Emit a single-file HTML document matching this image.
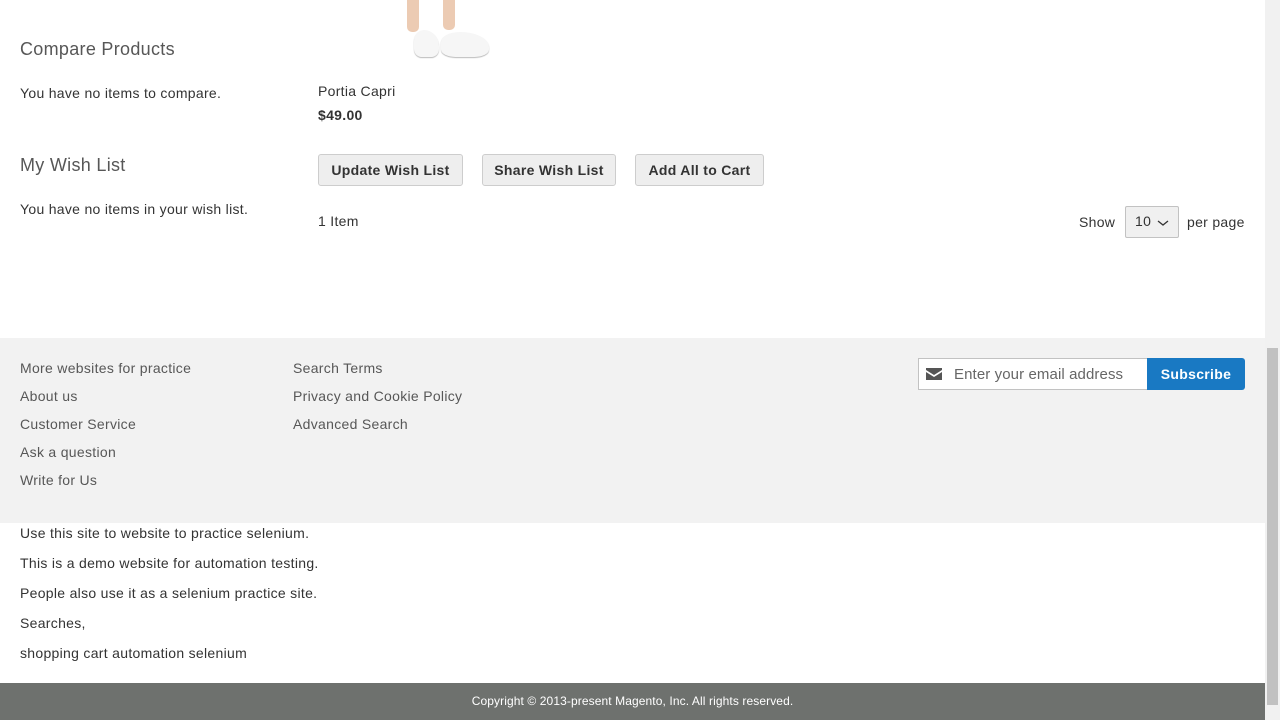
<!DOCTYPE html>
<html><head><meta charset="utf-8"><style>
*{margin:0;padding:0;box-sizing:border-box}
body{width:1280px;height:720px;position:relative;overflow:hidden;background:#fff;font-family:"Liberation Sans",sans-serif;font-size:14px;color:#333;letter-spacing:0.3px}
.a{position:absolute;white-space:nowrap;margin-top:1px}
.btn{position:absolute;height:32px;border:1px solid #cdcdcd;background:#eee;border-radius:3px;font-weight:bold;font-size:14px;color:#333;line-height:31px;text-align:center}
.leg{position:absolute;background:#eccbb3}
.shoe{position:absolute;background:#f6f6f6;border-radius:40% 60% 30% 30%;box-shadow:0 1px 1px #bbb}
</style></head><body>
<div class="leg" style="left:407px;top:0;width:12px;height:32px;border-radius:0 0 5px 5px"></div>
<div class="leg" style="left:443px;top:0;width:12px;height:30px;border-radius:0 0 5px 5px"></div>
<div class="shoe" style="left:414px;top:30px;width:25px;height:27px"></div>
<div class="shoe" style="left:441px;top:32px;width:48px;height:25px"></div>
<div class="a" style="left:20px;top:38px;font-size:18px;color:#575757">Compare Products</div>
<div class="a" style="left:20px;top:84px">You have no items to compare.</div>
<div class="a" style="left:20px;top:154px;font-size:18px;color:#575757">My Wish List</div>
<div class="a" style="left:20px;top:200px">You have no items in your wish list.</div>
<div class="a" style="left:318px;top:82px">Portia Capri</div>
<div class="a" style="left:318px;top:106px;font-weight:bold">$49.00</div>
<div class="btn" style="left:318px;top:154px;width:145px">Update Wish List</div>
<div class="btn" style="left:482px;top:154px;width:134px">Share Wish List</div>
<div class="btn" style="left:635px;top:154px;width:129px">Add All to Cart</div>
<div class="a" style="left:318px;top:212px">1 Item</div>
<div class="a" style="left:1079px;top:213px">Show</div>
<div style="position:absolute;left:1125px;top:206px;width:54px;height:32px;border:1px solid #c2c2c2;background:#f0f0f0;border-radius:2px"></div>
<div class="a" style="left:1135px;top:212px">10</div>
<svg class="a" style="left:1157px;top:218px" width="12" height="8"><path d="M1 2l5 4 5-4" stroke="#333" stroke-width="1.3" fill="none"/></svg>
<div class="a" style="left:1187px;top:213px">per page</div>
<div style="position:absolute;left:0;top:338px;width:1265px;height:185px;background:#f2f2f2"></div>
<div class="a" style="left:20px;top:359px;color:#575757">More websites for practice</div>
<div class="a" style="left:20px;top:387px;color:#575757">About us</div>
<div class="a" style="left:20px;top:415px;color:#575757">Customer Service</div>
<div class="a" style="left:20px;top:443px;color:#575757">Ask a question</div>
<div class="a" style="left:20px;top:471px;color:#575757">Write for Us</div>
<div class="a" style="left:293px;top:359px;color:#575757">Search Terms</div>
<div class="a" style="left:293px;top:387px;color:#575757">Privacy and Cookie Policy</div>
<div class="a" style="left:293px;top:415px;color:#575757">Advanced Search</div>
<div style="position:absolute;left:918px;top:358px;width:230px;height:32px;border:1px solid #c2c2c2;background:#fff"></div>
<svg class="a" style="left:926px;top:367px" width="16" height="12"><path d="M0 0h16v2l-8 5-8-5z M0 4l8 5 8-5v8H0z" fill="#555"/></svg>
<div class="a" style="left:954px;top:365px;font-size:15px;color:#666;letter-spacing:0.1px">Enter your email address</div>
<div style="position:absolute;left:1147px;top:358px;width:98px;height:32px;background:#1979c3;border-radius:0 3px 3px 0;color:#fff;font-weight:bold;font-size:14px;line-height:32px;text-align:center">Subscribe</div>
<div class="a" style="left:20px;top:524px">Use this site to website to practice selenium.</div>
<div class="a" style="left:20px;top:554px">This is a demo website for automation testing.</div>
<div class="a" style="left:20px;top:584px">People also use it as a selenium practice site.</div>
<div class="a" style="left:20px;top:614px">Searches,</div>
<div class="a" style="left:20px;top:644px">shopping cart automation selenium</div>
<div style="position:absolute;left:0;top:683px;width:1265px;height:37px;background:#6e716e;color:#fff;font-size:12px;text-align:center;line-height:37px;letter-spacing:0.1px">Copyright © 2013-present Magento, Inc. All rights reserved.</div>
<div style="position:absolute;left:1265px;top:0;width:15px;height:720px;background:#f1f1f1"></div>
<div style="position:absolute;left:1267px;top:348px;width:11px;height:357px;background:#c1c1c1"></div>
</body></html>
